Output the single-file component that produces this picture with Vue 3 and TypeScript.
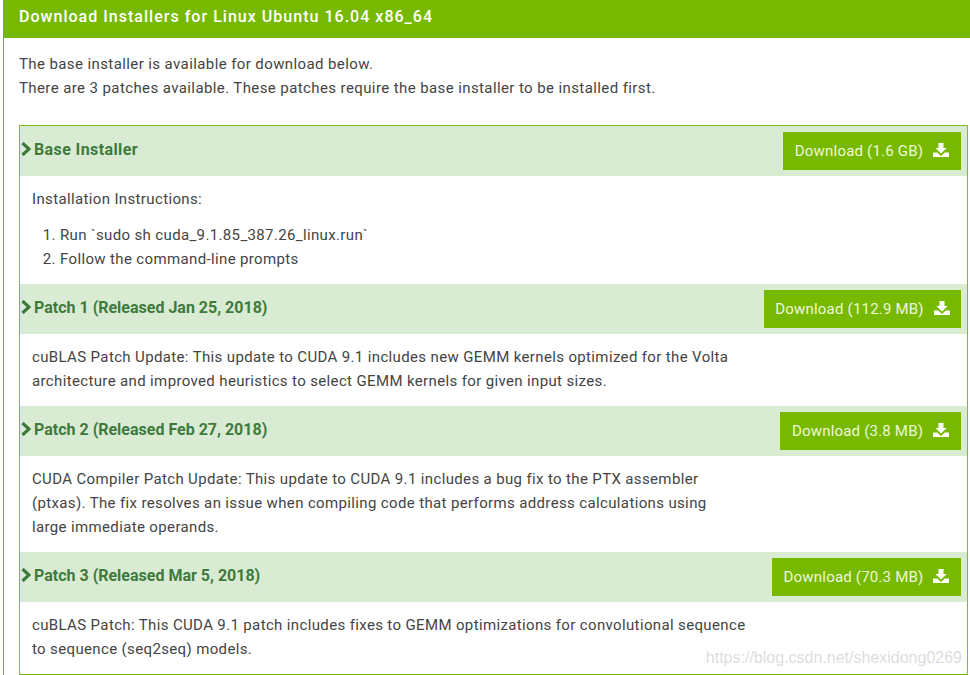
<script setup lang="ts">
interface Section {
  title: string
  size: string
  width: number
}
const sections: Section[] = [
  { title: 'Base Installer', size: '1.6 GB', width: 178 },
  { title: 'Patch 1 (Released Jan 25, 2018)', size: '112.9 MB', width: 197 },
  { title: 'Patch 2 (Released Feb 27, 2018)', size: '3.8 MB', width: 181 },
  { title: 'Patch 3 (Released Mar 5, 2018)', size: '70.3 MB', width: 189 },
]
</script>

<template>
  <div class="panel">
    <div class="panel-head">Download Installers for Linux Ubuntu 16.04 x86_64</div>
    <div class="panel-body">
      <p class="intro">The base installer is available for download below.<br />There are 3 patches available. These patches require the base installer to be installed first.</p>
      <div class="box">
        <template v-for="(s, i) in sections" :key="s.title">
          <div class="sec-head">
            <div class="sec-title" :class="{ 'sec-title-base': i === 0 }">
              <svg class="chev" viewBox="0 0 10 14" width="10" height="14"><path d="M1.5 1 L8 7 L1.5 13" fill="none" stroke="#3f7a3c" stroke-width="3.2" /></svg>
              <span>{{ s.title }}</span>
            </div>
            <div class="btn" :style="{ width: s.width + 'px' }">
              <span>Download ({{ s.size }})</span>
              <svg class="dl" viewBox="0 0 16 14" width="16" height="14">
                <path d="M5.5 0h5v5h3.2L8 10.6 2.3 5h3.2z" fill="#fff" />
                <path d="M0 9.5h4.2L8 13l3.8-3.5H16V14H0z" fill="#fff" />
              </svg>
            </div>
          </div>
          <div v-if="i === 0" class="sec-body first">
            <p>Installation Instructions:</p>
            <ol>
              <li>Run `sudo sh cuda_9.1.85_387.26_linux.run`</li>
              <li>Follow the command-line prompts</li>
            </ol>
          </div>
          <div v-else-if="i === 1" class="sec-body">
            <p>cuBLAS Patch Update: This update to CUDA 9.1 includes new GEMM kernels optimized for the Volta<br />architecture and improved heuristics to select GEMM kernels for given input sizes.</p>
          </div>
          <div v-else-if="i === 2" class="sec-body">
            <p>CUDA Compiler Patch Update: This update to CUDA 9.1 includes a bug fix to the PTX assembler<br />(ptxas). The fix resolves an issue when compiling code that performs address calculations using<br />large immediate operands.</p>
          </div>
          <div v-else class="sec-body">
            <p>cuBLAS Patch: This CUDA 9.1 patch includes fixes to GEMM optimizations for convolutional sequence<br />to sequence (seq2seq) models.</p>
          </div>
        </template>
      </div>
    </div>
    <div class="watermark">https://blog.csdn.net/shexidong0269</div>
  </div>
</template>

<style>
html, body { margin: 0; background: #fff; overflow: hidden; }
</style>

<style scoped>
.panel {
  position: relative;
  width: 967px;
  height: 675px;
  margin-left: 3px;
  box-sizing: border-box;
  border-left: 1px solid #76b900;
  font-family: Roboto, "Liberation Sans", sans-serif;
  font-size: 15px;
  letter-spacing: 0.4px;
  color: #444;
  overflow: hidden;
}
.panel-head {
  height: 38px;
  margin-left: -1px;
  padding-left: 16px;
  background: #76b900;
  color: #fff;
  font-size: 16px;
  letter-spacing: 1.02px;
  line-height: 33px;
  font-weight: 500;
}
.panel-body { padding: 14px 0 0 15px; }
.intro { margin: 0 0 25px; line-height: 24px; }
.box {
  border: 1px solid #86b52e;
  border-bottom-color: #76b900;
  width: 949px;
  box-sizing: border-box;
}
.sec-head {
  height: 50px;
  background: #d9ecd3;
  display: flex;
  align-items: flex-start;
  justify-content: space-between;
  padding-right: 6px;
}
.sec-title {
  display: flex;
  align-items: center;
  gap: 3px;
  height: 46px;
  color: #3f7a3c;
  font-weight: 700;
  font-size: 16px;
  letter-spacing: 0;
}
.sec-title-base { letter-spacing: 0.4px; }
.chev { margin-left: 1px; }
.btn {
  margin-top: 6px;
  height: 38px;
  background: #76b900;
  color: #eef7d8;
  display: flex;
  align-items: center;
  justify-content: center;
  gap: 10px;
  font-size: 15px;
  letter-spacing: 0.2px;
}
.dl { margin-top: -2px; }
.sec-body { padding: 11px 12px 13px; line-height: 24px; letter-spacing: 0.36px; }
.sec-body p { margin: 0; }
.first { padding-bottom: 13px; }
ol { margin: 12px 0 0; padding-left: 28px; }
.watermark {
  position: absolute;
  right: 8px;
  bottom: 8px;
  font-family: "Liberation Sans", sans-serif;
  font-size: 16px;
  letter-spacing: 0;
  color: rgba(150, 150, 150, 0.35);
}
</style>
